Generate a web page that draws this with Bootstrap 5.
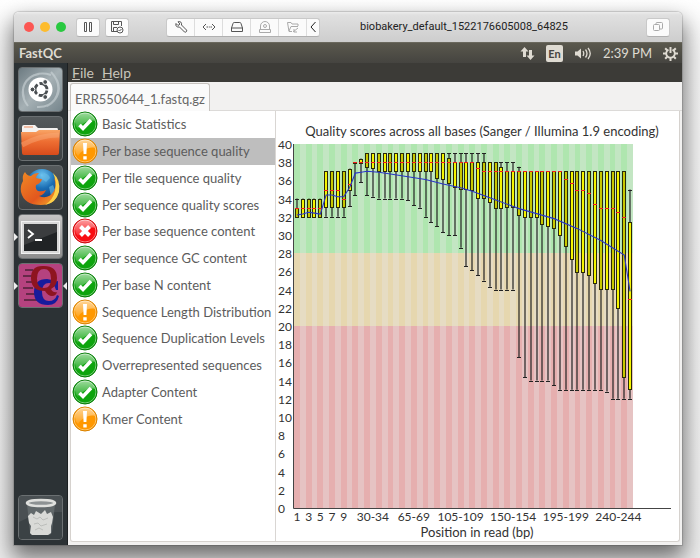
<!DOCTYPE html>
<html lang="en">
<head>
<meta charset="utf-8">
<meta name="viewport" content="width=device-width, initial-scale=1">
<title>FastQC</title>
<link rel="stylesheet" href="https://cdn.jsdelivr.net/npm/bootstrap@5.3.0/dist/css/bootstrap.min.css">
<style>
  body { font-family: Lato, "Noto Sans", sans-serif; font-size: 13px; line-height: 20px; color: #4c4c4c;
    background: linear-gradient(#fff, #f4f4f4 60px, #eee); min-height: 100vh; padding: 12px 18px 14px 14px; overflow-x: hidden; overflow-y: hidden; }
  button { font: inherit; color: inherit; }
  .vm-window { min-height: calc(100vh - 26px); border-radius: 5px 5px 0 0; box-shadow: 0 11px 22px 2px rgba(0,0,0,.55), 0 0 1px 1px rgba(0,0,0,.15); }
  .vm-bar { height: 30px; padding: 0 12px 0 10px; border-radius: 5px 5px 0 0; background: linear-gradient(#ececec, #e0e0e0 3px, #cdcdcd); font-family: Roboto, sans-serif; font-size: 11px; color: #222; }
  .dots { gap: 6px; }
  .dot { width: 10px; height: 10px; border-radius: 50%; border: 0; padding: 0; }
  .dot-red { background: #fc5753; } .dot-amber { background: #fdbc2e; } .dot-green { background: #29c940; }
  .vm-pair { gap: 5px; margin-left: 10px; }
  .vm-btn { height: 19px; width: 24px; padding: 0; border: 1px solid #c9c9c9; border-bottom-color: #b0b0b0; background: #fbfbfb; border-radius: 3px; color: #555; }
  .vm-set { height: 19px; margin-left: 37px; border: 1px solid #c9c9c9; border-bottom-color: #b0b0b0; border-radius: 3px; background: #fbfbfb; overflow: hidden; }
  .vm-set button { display: flex; align-items: center; justify-content: center; width: 28px; padding: 0; border: 0; border-right: 1px solid #ddd; background: none; color: #555; }
  .vm-set button:last-child { width: 12px; border: 0; }
  .vm-set .dim, .vm-btn.dim { color: #aaa; }
  .vm-name { margin-left: 40px; }
  .os-panel { height: 21px; padding: 0 4px 0 5px; background: linear-gradient(#5a584d, #454440); color: #dfdbd2; border-top: 1px solid #6a685d; }
  .tray { gap: 11px; }
  .lang { background: #dfdbd2; color: #454440; border-radius: 2px; width: 17px; height: 17px; font-size: 11px; font-weight: bold; line-height: 17px; }
  .launcher { width: 54px; padding: 4px 4px 5px; gap: 4px; background: #2c3235; border-right: 1px solid #1c2022; }
  .tile { display: block; width: 45px; height: 45px; padding: 0; border: 1px solid #6b7072; border-radius: 4px; background: linear-gradient(#555a5c, #3b4042); overflow: hidden; }
  .tile svg { display: block; width: 43px; height: 43px; }
  .running::before, .active-app::after { content: ""; position: absolute; top: 19px; border: 4px solid transparent; }
  .running::before { left: -4px; border-left-color: #eee; border-right-width: 0; }
  .active-app::after { right: -4px; border-right-color: #eee; border-left-width: 0; }
  .menu { height: 19px; background: #3c3b37; color: #c9c5bb; padding-left: 4px; gap: 8px; }
  .menu button { border: 0; background: none; padding: 0; line-height: 18px; font-size: 14px; }
  .app { background: #f2f1f0; }
  .tabs { height: 29px; padding: 1px 0 0 2px; border-bottom: 1px solid #dcdad8; }
  .tabs .nav-link { height: 28px; padding: 3px 4px 0; border: 1px solid #c6c2be; border-bottom: 0; border-radius: 3px 3px 0 0; color: #666; background: #fafafa; white-space: nowrap; font-size: 13px; }
  .panes { margin: 0 2px 3px 2px; background: #fff; border: 1px solid #d6d2ce; border-top: 0; border-radius: 0 0 3px 3px; }
  .modules { width: 205px; border-right: 1px solid #d9d6d3; }
  .module-list { display: grid; grid-auto-rows: 1fr; height: 321px; }
  .module { display: flex; align-items: center; gap: 4px; border: 0; background: none; padding: 0 0 0 1px; color: #5c5c5c; white-space: nowrap; text-align: left; overflow: hidden; }
  .module.selected { background: #bebebe; }
  .module svg { width: 26px; height: 26px; flex: none; }
  .plot svg { display: block; width: 100%; height: auto; }
  .plot text { fill: #333; font-size: 12px; }
  .plot .ttl { font-size: 13px; }
</style>
</head>
<body>
<svg width="0" height="0" class="position-absolute" aria-hidden="true">
  <defs>
    <linearGradient id="shine" x1="0" y1="0" x2="0" y2="1"><stop offset="0" stop-color="#fff" stop-opacity=".6"/><stop offset="1" stop-color="#fff" stop-opacity=".1"/></linearGradient>
    <linearGradient id="dash" x1="0" y1="0" x2="1" y2="1"><stop offset="0" stop-color="#6d7b82"/><stop offset=".5" stop-color="#a5b0b4"/><stop offset="1" stop-color="#76868d"/></linearGradient>
    <linearGradient id="folder" x1="0" y1="0" x2="0" y2="1"><stop offset="0" stop-color="#f8a566"/><stop offset=".45" stop-color="#ee6f33"/><stop offset="1" stop-color="#d94b1b"/></linearGradient>
    <radialGradient id="globe" cx=".5" cy=".2" r=".8"><stop offset="0" stop-color="#6ec4f0"/><stop offset=".5" stop-color="#1b6fb5"/><stop offset="1" stop-color="#123a78"/></radialGradient>
    <linearGradient id="fox" x1="0" y1="0" x2="1" y2="1"><stop offset="0" stop-color="#f08a24"/><stop offset=".6" stop-color="#e2571e"/><stop offset="1" stop-color="#f7b52b"/></linearGradient>
    <linearGradient id="silver" x1="0" y1="0" x2="0" y2="1"><stop offset="0" stop-color="#c5c5c5"/><stop offset="1" stop-color="#8d8d8d"/></linearGradient>
    <symbol id="pass" viewBox="0 0 26 26"><circle cx="13" cy="13" r="12" fill="#0da40d"/><circle cx="13" cy="13" r="11" fill="none" stroke="#7dcf7d"/><circle cx="13" cy="13" r="12" fill="none" stroke="#087a08"/><path d="M3 11a10 9 0 0 1 20-1C17 8 9 13 6 18Q3 15 3 11Z" fill="url(#shine)"/><path d="M7.500 14l3.500 3.500L19 9" fill="none" stroke="#fff" stroke-width="3.600"/></symbol>
    <symbol id="warn" viewBox="0 0 26 26"><circle cx="13" cy="13" r="12" fill="#ff9800"/><circle cx="13" cy="13" r="11" fill="none" stroke="#ffc66e"/><circle cx="13" cy="13" r="12" fill="none" stroke="#d98200"/><path d="M3 11a10 9 0 0 1 20-1C17 8 9 13 6 18Q3 15 3 11Z" fill="url(#shine)"/><path d="M11 5h4l-.6 11h-2.800zM11.300 18.200h3.400v3.200h-3.400z" fill="#fff"/></symbol>
    <symbol id="fail" viewBox="0 0 26 26"><circle cx="13" cy="13" r="12" fill="#f90d12"/><circle cx="13" cy="13" r="11" fill="none" stroke="#ff8a8a"/><circle cx="13" cy="13" r="12" fill="none" stroke="#c8080c"/><path d="M3 11a10 9 0 0 1 20-1C17 8 9 13 6 18Q3 15 3 11Z" fill="url(#shine)"/><path d="M8.500 8.500l9 9M17.500 8.500l-9 9" stroke="#fff" stroke-width="4"/></symbol>
  </defs>
</svg>

<main class="vm-window d-flex flex-column">
  <header class="vm-bar d-flex align-items-center">
    <div class="dots d-flex">
      <button class="dot dot-red" aria-label="Close"></button><button class="dot dot-amber" aria-label="Minimize"></button><button class="dot dot-green" aria-label="Zoom"></button>
    </div>
    <div class="vm-pair d-flex">
      <button class="vm-btn d-flex align-items-center justify-content-center" aria-label="Pause"><svg width="10" height="12" fill="none" stroke="currentColor"><path d="M1.500 1.500h2v9h-2zM6.500 1.500h2v9h-2z"/></svg></button>
      <button class="vm-btn d-flex align-items-center justify-content-center" aria-label="Snapshots"><svg width="14" height="14" fill="none" stroke="currentColor"><path d="M7 11.500H1.500v-10h10V6M3.500 1.500v3h5v-3M3.500 11V7.500H7"/><circle cx="10" cy="10" r="3"/><path d="M8.500 10l1 1 2-2"/></svg></button>
    </div>
    <div class="vm-set d-flex">
      <button aria-label="Settings"><svg width="14" height="14" fill="none" stroke="currentColor"><path d="M2 3.500l2 2L6 4 4 1.800C6.500 1 8 2.500 7.500 5l5 5c1 1-1 3-2 2l-5-5C3 7.500 1.200 6 2 3.500Z"/></svg></button>
      <button aria-label="Network"><svg width="14" height="14" fill="none" stroke="currentColor"><path d="M4 4L1 7l3 3M10 4l3 3-3 3M4.500 7h1.500M6.800 7h1M8.500 7h1.500"/></svg></button>
      <button aria-label="Hard disk"><svg width="14" height="14" fill="none" stroke="currentColor"><path d="M1.500 8L3 3.500Q3.200 2.500 4.200 2.500h5.600q1 0 1.200 1L12.500 8v3.500h-11zh11"/></svg></button>
      <button class="dim" aria-label="Optical drive"><svg width="14" height="14" fill="none" stroke="currentColor"><path d="M2.500 9V6a4.500 4.500 0 0 1 9 0v3M1.500 9.500h11v3h-11z"/><circle cx="7" cy="6" r="1.500"/></svg></button>
      <button class="dim" aria-label="Shared folder"><svg width="14" height="14" fill="none" stroke="currentColor"><path d="M6 11.500H3l-1.500-9H5l1 1.500h6V6M3 11l2-4.500h7M7 12l5-4M8 9v3h3"/></svg></button>
      <button aria-label="Collapse toolbar"><svg width="9" height="14" fill="none" stroke="#222"><path d="M6.500 2L2 7l4.500 5"/></svg></button>
    </div>
    <span class="vm-name text-nowrap">biobakery_default_1522176605008_64825</span>
    <button class="vm-btn dim ms-auto d-flex align-items-center justify-content-center" aria-label="Full screen"><svg width="12" height="12" fill="none" stroke="currentColor"><rect x="1.500" y="3.500" width="6" height="6" rx="1"/><path d="M4 3.500v-1q0-1 1-1h4.500q1 0 1 1V7q0 1-1 1h-2"/></svg></button>
  </header>

  <div class="os-panel d-flex align-items-center justify-content-between">
    <b>FastQC</b>
    <div class="tray d-flex align-items-center">
      <svg width="15" height="15" viewBox="0 0 15 15" fill="#dfdbd2"><path d="M4.500 1l4 4.500H6v5.500H3V5.500H.5zM10.500 14l-4-4.500H9V4h3v5.500h2.500z"/></svg>
      <span class="lang text-center">En</span>
      <svg width="18" height="15" viewBox="0 0 18 15" fill="none" stroke="#dfdbd2" stroke-width="1.300"><path d="M1 5.500h2.500L7 2.500v10l-3.500-3H1z" fill="#dfdbd2" stroke="none"/><path d="M9 5q1.500 2.500 0 5M11.500 3.500q3 4 0 8M14 2q4.500 5.500 0 11"/></svg>
      <span>2:39 PM</span>
      <svg width="15" height="15" viewBox="0 0 15 15" fill="none" stroke="#dfdbd2"><path d="M5.500 3.600a4.300 4.300 0 1 0 4 0" stroke-width="1.800"/><path d="M7.500 1v6M7.500 12v3M0 7.500h3M12 7.500h3M2.200 2.200l2 2M10.800 10.800l2 2M2.200 12.800l2-2M10.800 4.200l2-2" stroke-width="2"/></svg>
    </div>
  </div>

  <div class="d-flex flex-grow-1">
    <nav class="launcher d-flex flex-column flex-shrink-0 position-relative" aria-label="Launcher">
      <div class="position-relative"><button class="tile" aria-label="Dash"><svg viewBox="0 0 43 43"><rect width="43" height="43" fill="url(#dash)"/><path d="M5 30C0 12 16 2 32 7M38 12c6 14-4 28-20 27M9 38C-2 24 6 8 20 6M32 4c12 12 8 28-4 34" fill="none" stroke="#cdd5d8" stroke-width="2" opacity=".6"/><circle cx="21.500" cy="21.500" r="12" fill="#fff"/><circle cx="22" cy="21.500" r="6" fill="none" stroke="#4a4f52" stroke-width="2.800" stroke-dasharray="10.500 2" stroke-dashoffset="-1"/><g fill="#4a4f52" stroke="#fff"><circle cx="13.500" cy="21.500" r="2.400"/><circle cx="26.200" cy="14" r="2.400"/><circle cx="26.200" cy="29" r="2.400"/></g></svg></button></div>
      <div class="position-relative"><button class="tile" aria-label="Files"><svg viewBox="0 0 43 43"><path d="M3 13V10q0-2 2-2h11l3 3h19q1 0 1 2v4H3z" fill="#f4f2f0"/><path d="M5 10h9" stroke="#ee8a5a"/><path d="M2 15h15l3-2h21l-1 23q0 2-2 2H5q-2 0-2-2z" fill="url(#folder)"/><path d="M3 28q18-10 37-10" fill="none" stroke="#f9b183" opacity=".4" stroke-width="5"/></svg></button></div>
      <div class="position-relative"><button class="tile" aria-label="Firefox"><svg viewBox="0 0 43 43"><circle cx="23" cy="19" r="16" fill="url(#globe)"/><path d="M25 7q5 1 6 5l-4 4-5-4zM30 21l4-2 2 5-4 6z" fill="#68bde8" opacity=".6"/><path d="M4 15Q3 9 6 6q2 4 6 4 3-3 8-3-3 3-3 5 3 1 6 1-1 4-6 6-1 4 2 6 4 1 8-1-2 5-7 6 9 4 15-5 3-6 0-13 6 5 4 15-3 12-17 12Q5 39 2 26q-1-6 2-11Z" fill="url(#fox)"/><path d="M34 7q8 7 6 19-3 11-14 13 8-5 10-14 2-10-2-18Z" fill="#fcd04a"/></svg></button></div>
      <div class="position-relative running"><button class="tile" aria-label="Terminal"><svg viewBox="0 0 43 43"><rect width="43" height="43" fill="url(#silver)"/><rect x="2.500" y="6.500" width="38" height="32" fill="#d8d8d8" stroke="#f2f2f2"/><rect x="5" y="9" width="33" height="27" fill="#202325"/><path d="M5 9h33v8L5 30z" fill="#fff" opacity=".12"/><path d="M9 15l5 4-5 4M16 25h7" fill="none" stroke="#fff" stroke-width="1.800"/></svg></button></div>
      <div class="position-relative running active-app"><button class="tile" aria-label="FastQC"><svg viewBox="0 0 43 43"><rect width="43" height="43" fill="#b5427f"/><path d="M6 6h8M4 12h9M7 18h7M4 24h10M7 30h10M5 36h14" stroke="#4d2039" stroke-width="1.500"/><path d="M39 17v9h-2q-2-7-7-7-7 0-7 9t7 9q6 0 8-6l2 1q-2 9-11 9-14 0-14-13t13-13q4 0 7 3z" fill="#171b9c"/><path fill-rule="evenodd" d="M25 2q13 0 13 12 0 8-6 11 2 4 6 3-1 4-5 4-4 0-7-5-14 0-14-13T25 2Zm0 3q-7 0-7 9.500T25 24q7 0 7-9.500T25 5Z" fill="#8e1420"/></svg></button></div>
      <div class="position-relative mt-auto"><button class="tile" aria-label="Trash"><svg viewBox="0 0 43 43"><rect width="43" height="43" fill="#3b4245"/><path d="M0 0h43v16Q20 15 0 26z" fill="#fff" opacity=".08"/><path d="M8 8l3 28q0 3 3 3h16q2 0 3-3l3-28z" fill="#777d7f" opacity=".55"/><path d="M9 20l3-3 3 2 2-4 5 3 4-4 2 4 4-2 2 5-1 6-1 3 0 7-3 2H13l-2-2 1-7-2-3z" fill="#d9dad7"/><path d="M14 21l4 2 3-2 3 3 5-2M15 28l4-1 3 3 6-2M16 34l4-2 4 2" fill="none" stroke="#bcbebb"/><ellipse cx="22" cy="7" rx="14" ry="3" fill="#8d9293" stroke="#dfe0dd" stroke-width="2.500"/></svg></button></div>
    </nav>

    <div class="app d-flex flex-column flex-grow-1">
      <div class="menu d-flex align-items-center"><button><u>F</u>ile</button><button><u>H</u>elp</button></div>
      <div class="tabs nav" role="tablist"><button class="nav-link" role="tab" aria-selected="true">ERR550644_1.fastq.gz</button></div>
      <div class="panes d-flex flex-grow-1">
        <section class="modules flex-shrink-0" aria-label="Modules">
          <div class="module-list">
            <button class="module"><svg><use href="#pass"/></svg>Basic Statistics</button>
            <button class="module selected"><svg><use href="#warn"/></svg>Per base sequence quality</button>
            <button class="module"><svg><use href="#pass"/></svg>Per tile sequence quality</button>
            <button class="module"><svg><use href="#pass"/></svg>Per sequence quality scores</button>
            <button class="module"><svg><use href="#fail"/></svg>Per base sequence content</button>
            <button class="module"><svg><use href="#pass"/></svg>Per sequence GC content</button>
            <button class="module"><svg><use href="#pass"/></svg>Per base N content</button>
            <button class="module"><svg><use href="#warn"/></svg>Sequence Length Distribution</button>
            <button class="module"><svg><use href="#pass"/></svg>Sequence Duplication Levels</button>
            <button class="module"><svg><use href="#pass"/></svg>Overrepresented sequences</button>
            <button class="module"><svg><use href="#pass"/></svg>Adapter Content</button>
            <button class="module"><svg><use href="#warn"/></svg>Kmer Content</button>
          </div>
        </section>
        <section class="plot flex-grow-1"><svg id="chart" viewBox="0 0 403 430" role="img" aria-label="Quality scores across all bases"></svg></section>
      </div>
    </div>
  </div>
</main>

<script src="https://cdn.jsdelivr.net/npm/bootstrap@5.3.0/dist/js/bootstrap.bundle.min.js"></script>
<script>
  // One row per position group: [upper whisker, box top, box bottom, lower whisker, median]
  const boxes = [
    [34,33,32,32,33],[34,34,32,32,33],[34,34,32,32,33],[34,34,32,32,33],[34,34,32,32,33],
    [37,37,33,32,35],[37,37,33,32,35],[37,37,33,32,35],[37,37,33,32,34],[37.3,37.3,35,33.2,35.6],
    [38,38,37.9,34.4,38],[38.4,38.4,38,35.8,38],[39,39,37.5,34.4,38],[39,39,37.3,34.2,38],
    [39,39,37,34,38],[39,39,37,34,38],[39,39,37,34,38],[39,39,37,34,38],[39,39,37,34,38],
    [39,39,37,33.8,38],[39,39,37,33.3,38],[39,39,37,33,38],[39,39,37,32,38],[39,39,37,31.4,38],
    [39,39,36.3,31,38],[39,39,36.1,30.3,38],[39,38.5,35.8,30,38],[39,38,35.3,30,38],
    [39,38,35,28.6,38],[39,38,35,26.6,38],[39,38,34.9,26.1,38],[39,38,34,25.6,37.4],
    [39,38,34,25,37],[38,38,33.6,24.3,37],[38,38,33,24,37],[38,37.5,33,24,37],[38,37,33,24,37],
    [38,37,33,24,37],[37.5,37,32.2,16.6,37],[37,37,32,14.4,37],[37,37,32,14,37],[37,37,32,14,37],
    [37,37,31.2,14,37],[37,37,31,14,37],[37,37,30.7,13.5,37],[37,37,30,13,37],[37,37,28.8,13,36.1],
    [37,37,27.3,13,35.7],[37,37,25.9,13,34.9],[37,37,25.9,13,34.9],[37,37,25.6,13,34.6],
    [37,37,24.7,13,33.4],[37,37,24,13,33],[37,37,24,12.8,33],[37,37,24,12,33],[37,37,22,12,32.5],
    [37,37,14.4,12,32],[35,31.4,13,12,23]];
  // Mean line: [group index, value]
  const means = [[0,32.2],[1,32.3],[2,32.5],[3,32.4],[4,32.3],[5,34.4],[6,34.4],[7,34.2],[8,34.2],[9,35.2],
    [10,36.8],[11,36.9],[12,37],[14,36.9],[16,36.7],[19,36.4],[22,36.1],[25,35.6],[28,35.2],[30,34.8],
    [33,34.1],[38,32.9],[44,31.8],[48,30.7],[52,29.4],[56,27.8],[57,23.8]];
  const left = 18, base = 397, unit = 9.1, step = 339 / boxes.length;
  const Y = v => base - v * unit, X = i => left + (i + .5) * step;
  const zones = [[40,28,'#c3e6c3','#afe6af'],[28,20,'#e6dcc3','#e6d7af'],[20,0,'#e6c3c3','#e6afaf']];
  let s = '<g shape-rendering="crispEdges">';
  for (const [hi, lo, a, b] of zones) {
    s += `<rect x="${left}" y="${Y(hi)}" width="339" height="${Y(lo) - Y(hi)}" fill="${a}"/>`;
    for (let i = 0; i < boxes.length; i++)
      if (i % 2 === 0) s += `<rect x="${left + i * step}" y="${Y(hi)}" width="${step}" height="${Y(lo) - Y(hi)}" fill="${b}"/>`;
  }
  s += '</g>';
  boxes.forEach(([wt, t, b, wl, m], i) => {
    const x = Math.round(X(i));
    s += `<path d="M${x} ${Y(wt)}V${Y(wl)}" stroke="#222" stroke-width="1.2" fill="none"/>`
      + `<path d="M${x - 2} ${Math.round(Y(wt)) + .5}h4M${x - 2} ${Math.round(Y(wl)) + .5}h4" stroke="#222" fill="none"/>`
      + `<rect x="${x - 1.5}" y="${Math.round(Y(t)) + .5}" width="3" height="${Math.max(1, Math.round(Y(b) - Y(t)))}" fill="${i % 2 ? '#f5f500' : '#c8c800'}" stroke="#2a2a08" stroke-width="1"/>`
      + `<path d="M${x - 2} ${Math.round(Y(m)) + .5}h4" stroke="#f02020"/>`;
  });
  s += `<polyline points="${means.map(([i, v]) => X(i) + ',' + Y(v)).join(' ')}" fill="none" stroke="#2a35c8" stroke-width="1.1"/>`;
  s += `<path d="M${left - .5} ${Y(40)}V${base + .5}H395" stroke="#444" fill="none"/>`;
  for (let v = 0; v <= 40; v += 2) s += `<text x="2" y="${Y(v) + 5}">${v}</text>`;
  [[0,'1'],[2,'3'],[4,'5'],[6,'7'],[8,'9'],[13,'30-34'],[20,'65-69'],[28,'105-109'],[37,'150-154'],[46,'195-199'],[55,'240-244']]
    .forEach(([i, t]) => s += `<text x="${X(i)}" y="410" text-anchor="middle">${t}</text>`);
  s += '<text class="ttl" x="206" y="25" text-anchor="middle">Quality scores across all bases (Sanger / Illumina 1.9 encoding)</text>';
  s += '<text class="ttl" x="201" y="426" text-anchor="middle">Position in read (bp)</text>';
  document.getElementById('chart').innerHTML = s;
</script>
</body>
</html>
